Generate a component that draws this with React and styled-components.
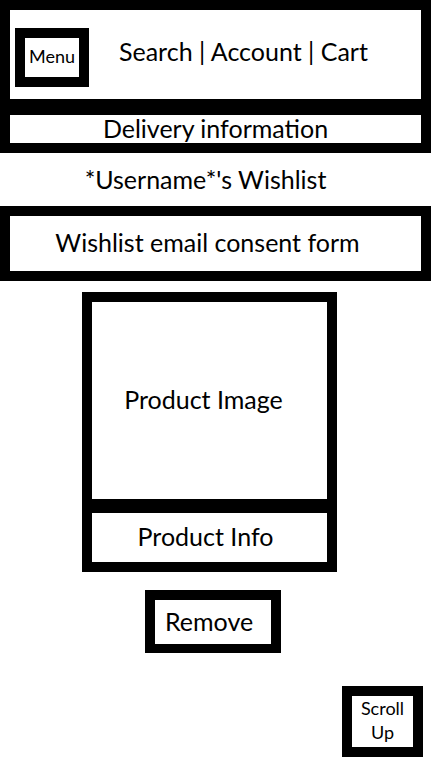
import React from "react";
import styled, { createGlobalStyle } from "styled-components";

const Global = createGlobalStyle`
  html, body { margin: 0; padding: 0; background: #fff; }
  body { font-family: Lato, "Open Sans", "Liberation Sans", sans-serif; color: #000; }
  * { box-sizing: border-box; }
`;

const Page = styled.div`
  width: 431px;
  min-height: 767px;
  display: flex;
  flex-direction: column;
  background: #fff;
`;

const Header = styled.header`
  background: #000;
  padding: 10px;
  display: flex;
  flex-direction: column;
  gap: 16px;
`;

const TopBar = styled.div`
  background: #fff;
  height: 89px;
  display: flex;
  align-items: flex-start;
  padding: 18px 0 0 5px;
`;

const MenuBox = styled.div`
  width: 74px;
  height: 59px;
  border: 10px solid #000;
  display: flex;
  align-items: center;
  justify-content: center;
  font-size: 18px;
  padding-bottom: 3px;
`;

const Nav = styled.nav`
  margin-left: 30px;
  margin-top: 8px;
  font-size: 25px;
  line-height: 30px;
  white-space: nowrap;
`;

const Delivery = styled.div`
  background: #fff;
  height: 28px;
  display: flex;
  align-items: center;
  justify-content: center;
  font-size: 25px;
  line-height: 28px;
  padding-bottom: 3px;
`;

const Title = styled.h1`
  margin: 0;
  height: 53px;
  display: flex;
  align-items: center;
  justify-content: center;
  padding-right: 20px;
  padding-bottom: 2px;
  font-size: 25px;
  font-weight: 400;
`;

const Consent = styled.div`
  height: 75px;
  border: 10px solid #000;
  display: flex;
  align-items: center;
  justify-content: center;
  padding-right: 16px;
  padding-bottom: 4px;
  font-size: 25px;
`;

const Card = styled.article`
  margin: 11px 0 0 82px;
  width: 255px;
  height: 280px;
  background: #000;
  padding: 10px;
  display: flex;
  flex-direction: column;
  gap: 14px;
`;

const Panel = styled.div`
  background: #fff;
  height: ${(p) => p.$h}px;
  display: flex;
  align-items: center;
  justify-content: center;
  padding-right: ${(p) => p.$pr || 0}px;
  padding-bottom: 3px;
  font-size: 25px;
`;

const RemoveButton = styled.button`
  margin: 18px 0 0 145px;
  width: 136px;
  height: 63px;
  border: 10px solid #000;
  border-bottom-width: 9px;
  background: #fff;
  padding: 0 0 3px 10px;
  text-align: left;
  font-family: inherit;
  font-size: 25px;
  color: #000;
  align-self: flex-start;
`;

const ScrollUp = styled.button`
  margin: 33px 8px 0 0;
  align-self: flex-end;
  width: 81px;
  height: 71px;
  border: 10px solid #000;
  background: #fff;
  padding: 0 0 4px;
  font-family: inherit;
  font-size: 18px;
  line-height: 24px;
  color: #000;
`;

export default function App() {
  return (
    <Page>
      <Global />
      <Header>
        <TopBar>
          <MenuBox>Menu</MenuBox>
          <Nav>Search | Account | Cart</Nav>
        </TopBar>
        <Delivery>Delivery information</Delivery>
      </Header>
      <Title>*Username*'s Wishlist</Title>
      <Consent>Wishlist email consent form</Consent>
      <Card>
        <Panel $h={197} $pr={12}>Product Image</Panel>
        <Panel $h={49} $pr={8}>Product Info</Panel>
      </Card>
      <RemoveButton>Remove</RemoveButton>
      <ScrollUp>
        Scroll
        <br />
        Up
      </ScrollUp>
    </Page>
  );
}
